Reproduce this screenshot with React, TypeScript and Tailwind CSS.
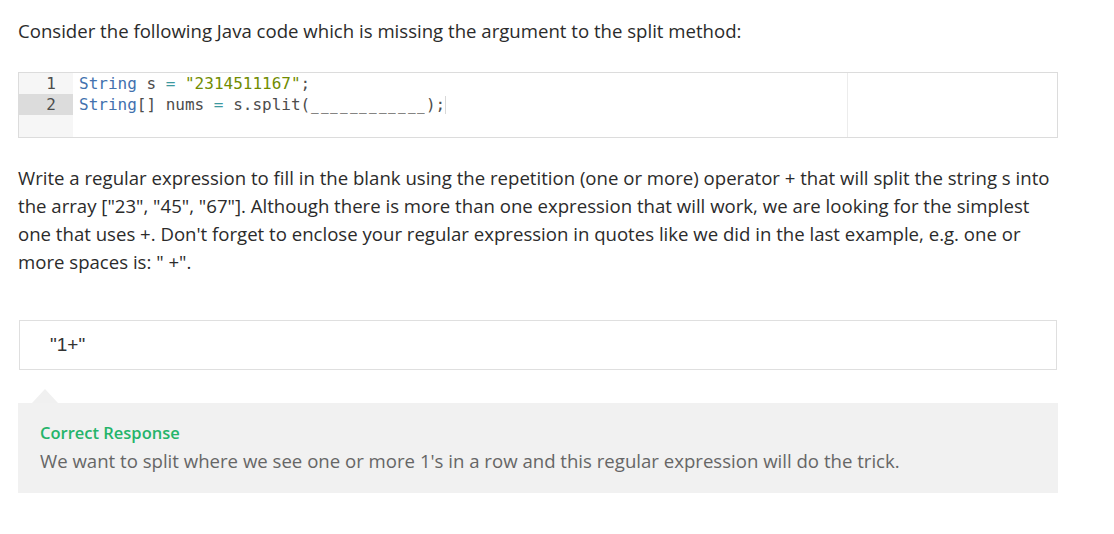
import React from 'react';

const sans = { fontFamily: '"Open Sans", "Noto Sans", sans-serif' };

const CodeLine = ({ n, active, children }: { n: number; active?: boolean; children: React.ReactNode }) => (
  <div className="flex h-[21px] leading-[21px]">
    <div className={`w-[54px] shrink-0 pr-[17px] text-right ${active ? 'bg-[#dcdcdc]' : 'bg-[#f6f6f6]'}`}>{n}</div>
    <div className="pl-[6px] whitespace-pre">{children}</div>
  </div>
);

const blanks = Array.from({ length: 12 });

const App = () => {
  return (
    <div className="min-h-screen bg-white pl-[18px] pt-[17px] text-[#2b2b2b]" style={sans}>
      <div className="w-[1040px]">
        <p className="text-[18.6px] leading-[28px]">
          Consider the following Java code which is missing the argument to the split method:
        </p>

        <div
          className="relative mt-[27px] h-[66px] border border-[#dcdcdc] text-[16px] text-[#4d4d4c]"
          style={{ fontFamily: '"DejaVu Sans Mono", monospace' }}
        >
          <div className="absolute bottom-0 left-0 top-0 w-[54px] bg-[#f6f6f6]" />
          <div className="absolute bottom-0 top-0 left-[828px] w-px bg-[#ececec]" />
          <div className="relative">
            <CodeLine n={1}>
              <span className="text-[#4271ae]">String</span> s <span className="text-[#3e999f]">=</span>{' '}
              <span className="text-[#718c00]">"2314511167"</span>;
            </CodeLine>
            <CodeLine n={2} active>
              <span className="text-[#4271ae]">String</span>[] nums <span className="text-[#3e999f]">=</span> s.split(
              {blanks.map((_, i) => (
                <span key={i} className="inline-block scale-x-[0.8]">
                  _
                </span>
              ))}
              );
              <span className="inline-block h-[18px] w-px translate-y-[2px] bg-[#d8d8d8] align-top" />
            </CodeLine>
          </div>
        </div>

        <p className="mt-[26px] whitespace-nowrap text-[18.6px] leading-[28px]">
          Write a regular expression to fill in the blank using the repetition (one or more) operator + that will split the string s into
          <br />
          the array ["23", "45", "67"]. Although there is more than one expression that will work, we are looking for the simplest
          <br />
          one that uses +. Don't forget to enclose your regular expression in quotes like we did in the last example, e.g. one or
          <br />
          more spaces is: " +".
        </p>

        <div className="ml-px mt-[44px] flex h-[50px] w-[1038px] items-center border border-[#dfdfdf] pl-[30px]">
          <span className="text-[19px] text-[#333]" style={{ fontFamily: '"Liberation Sans", Arial, sans-serif' }}>
            "1+"
          </span>
        </div>

        <div className="ml-[14px] mt-[19px] h-0 w-0 border-x-[13px] border-b-[14px] border-x-transparent border-b-[#f0f0f0]" />
        <div className="bg-[#f1f1f1] px-[22px] pb-[18px] pt-[18px]">
          <div className="text-[16.5px] font-semibold leading-[24px] text-[#25b46a]">Correct Response</div>
          <div className="mt-[2px] text-[18.6px] leading-[28px] text-[#666]">
            We want to split where we see one or more 1's in a row and this regular expression will do the trick.
          </div>
        </div>
      </div>
    </div>
  );
};

export default App;
